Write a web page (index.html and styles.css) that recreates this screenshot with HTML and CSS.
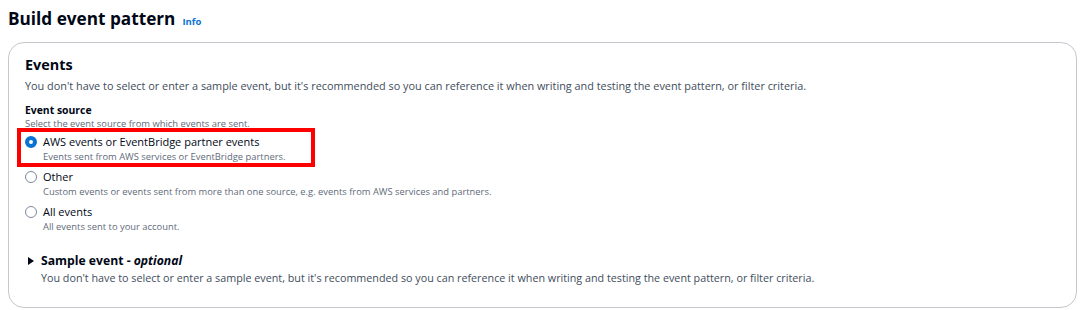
FILE: index.html
```html
<!DOCTYPE html>
<html lang="en">
  <head>
    <meta charset="UTF-8" />
    <title>Build event pattern</title>
    <link rel="stylesheet" href="styles.css">
  </head>
  <body>
    <div class="page">
      <h2 class="title">Build event pattern <a class="info" href="#">Info</a></h2>

      <div class="card">
        <h3>Events</h3>
        <p class="desc">You don't have to select or enter a sample event, but it's recommended so you can reference it when writing and testing the event pattern, or filter criteria.</p>

        <div class="field">
          <div class="field-label">Event source</div>
          <div class="field-hint">Select the event source from which events are sent.</div>

          <div class="options">
            <label class="option highlight">
              <span class="radio checked"></span>
              <span class="option-text">
                <span class="option-title">AWS events or EventBridge partner events</span>
                <span class="option-desc">Events sent from AWS services or EventBridge partners.</span>
              </span>
            </label>
            <label class="option">
              <span class="radio"></span>
              <span class="option-text">
                <span class="option-title">Other</span>
                <span class="option-desc">Custom events or events sent from more than one source, e.g. events from AWS services and partners.</span>
              </span>
            </label>
            <label class="option">
              <span class="radio"></span>
              <span class="option-text">
                <span class="option-title">All events</span>
                <span class="option-desc">All events sent to your account.</span>
              </span>
            </label>
          </div>
        </div>

        <div class="expander">
          <div class="expander-head">
            <span class="caret"></span>
            <span>Sample event - <em>optional</em></span>
          </div>
          <p class="expander-desc">You don't have to select or enter a sample event, but it's recommended so you can reference it when writing and testing the event pattern, or filter criteria.</p>
        </div>
      </div>
    </div>
  </body>
</html>
```

FILE: styles.css
```css
body {
  margin: 0;
  background-color: #fff;
  font-family: "Open Sans", Arial, sans-serif;
  color: #000716;
}
.page {
  padding: 7px 8px 0 8px;
  width: 1069px;
}
.title {
  margin: 0 0 8px 0;
  font-size: 17.2px;
  font-weight: 700;
  line-height: 24px;
  display: flex;
  align-items: baseline;
  gap: 7px;
}
.info {
  color: #0972d3;
  font-size: 9.5px;
  font-weight: 700;
  text-decoration: none;
}
.card {
  border: 1px solid #c6c6cd;
  border-radius: 16px;
  padding: 12px 16px 21px 16px;
}
h3 {
  margin: 0;
  font-size: 14.4px;
  line-height: 20px;
  font-weight: 700;
}
.desc {
  margin: 3px 0 0 0;
  font-size: 10.86px;
  line-height: 16px;
  color: #414d5c;
}
.field {
  margin-top: 9px;
}
.field-label {
  font-size: 10.4px;
  font-weight: 700;
  line-height: 14px;
}
.field-hint {
  font-size: 9.4px;
  line-height: 14px;
  color: #5f6b7a;
}
.options {
  margin-top: 3px;
  display: flex;
  flex-direction: column;
  gap: 5px;
}
.option {
  display: flex;
  align-items: flex-start;
  gap: 6px;
  position: relative;
}
.option.highlight::after {
  content: "";
  position: absolute;
  left: -8px;
  top: -6px;
  width: 298px;
  height: 39px;
  border: 4px solid #ff0000;
  box-sizing: border-box;
}
.radio {
  width: 12px;
  height: 12px;
  border: 1.5px solid #7d8998;
  border-radius: 50%;
  margin-top: 2px;
  box-sizing: border-box;
  flex-shrink: 0;
}
.radio.checked {
  border: 4.5px solid #0972d3;
}
.option-text {
  display: flex;
  flex-direction: column;
}
.option-title {
  font-size: 11px;
  line-height: 16px;
}
.option-desc {
  font-size: 9.4px;
  line-height: 14px;
  color: #5f6b7a;
}
.expander {
  margin-top: 18px;
}
.expander-head {
  display: flex;
  align-items: center;
  gap: 7px;
  padding-left: 3px;
  font-size: 12.2px;
  font-weight: 700;
  line-height: 18px;
}
.caret {
  width: 0;
  height: 0;
  border-left: 6px solid #000716;
  border-top: 4px solid transparent;
  border-bottom: 4px solid transparent;
}
.expander-desc {
  margin: 0 0 0 16px;
  font-size: 10.75px;
  line-height: 16px;
  color: #414d5c;
}
```
